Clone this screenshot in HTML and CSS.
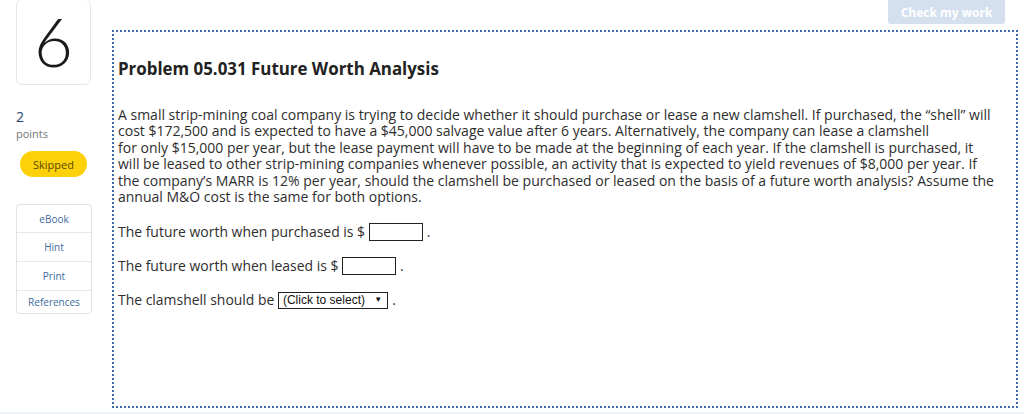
FILE: index.html
```html
<!DOCTYPE html>
<html>
<head>
<meta charset="utf-8">
<link rel="stylesheet" href="styles.css">
</head>
<body>
<div class="page">
  <aside class="side">
    <div class="qnum">6</div>
    <div class="pts"><div class="pts-n">2</div><div class="pts-l">points</div></div>
    <div class="skipped">Skipped</div>
    <ul class="res">
      <li>eBook</li>
      <li>Hint</li>
      <li>Print</li>
      <li>References</li>
    </ul>
  </aside>
  <main class="main">
    <div class="topbar"><button class="check">Check my work</button></div>
    <section class="qbox">
      <h1 class="title">Problem 05.031 Future Worth Analysis</h1>
      <p class="prob">A small strip-mining coal company is trying to decide whether it should purchase or lease a new clamshell. If purchased, the “shell” will<br>cost $172,500 and is expected to have a $45,000 salvage value after 6 years. Alternatively, the company can lease a clamshell<br>for only $15,000 per year, but the lease payment will have to be made at the beginning of each year. If the clamshell is purchased, it<br>will be leased to other strip-mining companies whenever possible, an activity that is expected to yield revenues of $8,000 per year. If<br>the company’s MARR is 12% per year, should the clamshell be purchased or leased on the basis of a future worth analysis? Assume the<br>annual M&amp;O cost is the same for both options.</p>
      <div class="ans">The future worth when purchased is $ <span class="inp"></span> <span class="dot">.</span></div>
      <div class="ans">The future worth when leased is $ <span class="inp"></span> <span class="dot">.</span></div>
      <div class="ans">The clamshell should be <span class="sel">(Click to select) <span class="arr">▼</span></span> <span class="dot">.</span></div>
    </section>
  </main>
</div>
<div class="footline"></div>
</body>
</html>
```
FILE: styles.css
```css
html, body { margin: 0; padding: 0; background: #fff; }
body { font-family: "Open Sans", "Liberation Sans", sans-serif; color: #222; height: 414px; overflow: hidden; position: relative; }
.page { display: flex; height: 412px; }
.side { width: 112px; box-sizing: border-box; padding-left: 16px; display: flex; flex-direction: column; }
.qnum { border: 1px solid #e6e6e6; border-radius: 6px; display: flex; align-items: center; justify-content: center; font-family: "Lato", sans-serif; font-size: 67px; font-weight: 300; color: #1a1a1a; margin-top: -1px; line-height: 1; padding-bottom: 2px; box-sizing: border-box; height: 86px; width: 75px; }
.pts { margin-top: 24px; }
.pts-n { font-size: 14px; color: #1f3f6b; line-height: 16px; }
.pts-l { font-size: 11px; color: #777; line-height: 14px; margin-top: 2px; }
.skipped { margin: 10px 0 0 4px; width: 67px; height: 26px; border-radius: 13px; background: #fdd10a; color: #5a4a00; font-size: 11px; display: flex; align-items: center; justify-content: center; }
.res { list-style: none; margin: 27px 0 0 0; padding: 0; width: 74px; border: 1px solid #e2e2e2; border-radius: 4px; }
.res li { height: 28px; display: flex; align-items: center; justify-content: center; font-size: 10px; color: #3d6a9e; border-top: 1px solid #e8e8e8; }
.res li:first-child { border-top: none; height: 27px; }
.res li:last-child { height: 22px; }
.main { width: 906px; display: flex; flex-direction: column; }
.topbar { height: 30px; display: flex; justify-content: flex-end; padding-right: 13px; }
.check { width: 117px; height: 24px; border: none; border-radius: 0 0 3px 3px; background: #d5e0ee; color: #fff; font-family: inherit; font-weight: 700; font-size: 12px; padding: 0; }
.qbox { flex: 1; border: 2px dotted #3d6aa8; padding: 0 0 0 4px; margin-bottom: 4px; }
.title { font-size: 16.9px; font-weight: 700; margin: 26px 0 0 0; line-height: 22px; color: #222; }
.prob { font-size: 14px; line-height: 16.4px; margin: 27px 0 0 0; padding-right: 0; white-space: nowrap; color: #2e2e2e; }
.ans { font-size: 13.95px; line-height: 18px; margin-top: 16px; color: #2e2e2e; display: flex; align-items: center; white-space: pre; }
.ans:first-of-type { margin-top: 18px; }
.inp { display: inline-block; width: 52px; height: 16px; border: 1px solid #222; background: #fff; }
.dot { margin-left: 4px; }
.sel { display: inline-flex; align-items: center; height: 15px; border: 1px solid #222; padding: 0 5px 0 4px; font-family: "Liberation Sans", Arial, sans-serif; font-size: 12px; color: #111; }
.arr { font-size: 8px; margin-left: 6px; }
.footline { position: absolute; left: 0; right: 0; bottom: 0; height: 2px; background: #eef1f5; }
```
